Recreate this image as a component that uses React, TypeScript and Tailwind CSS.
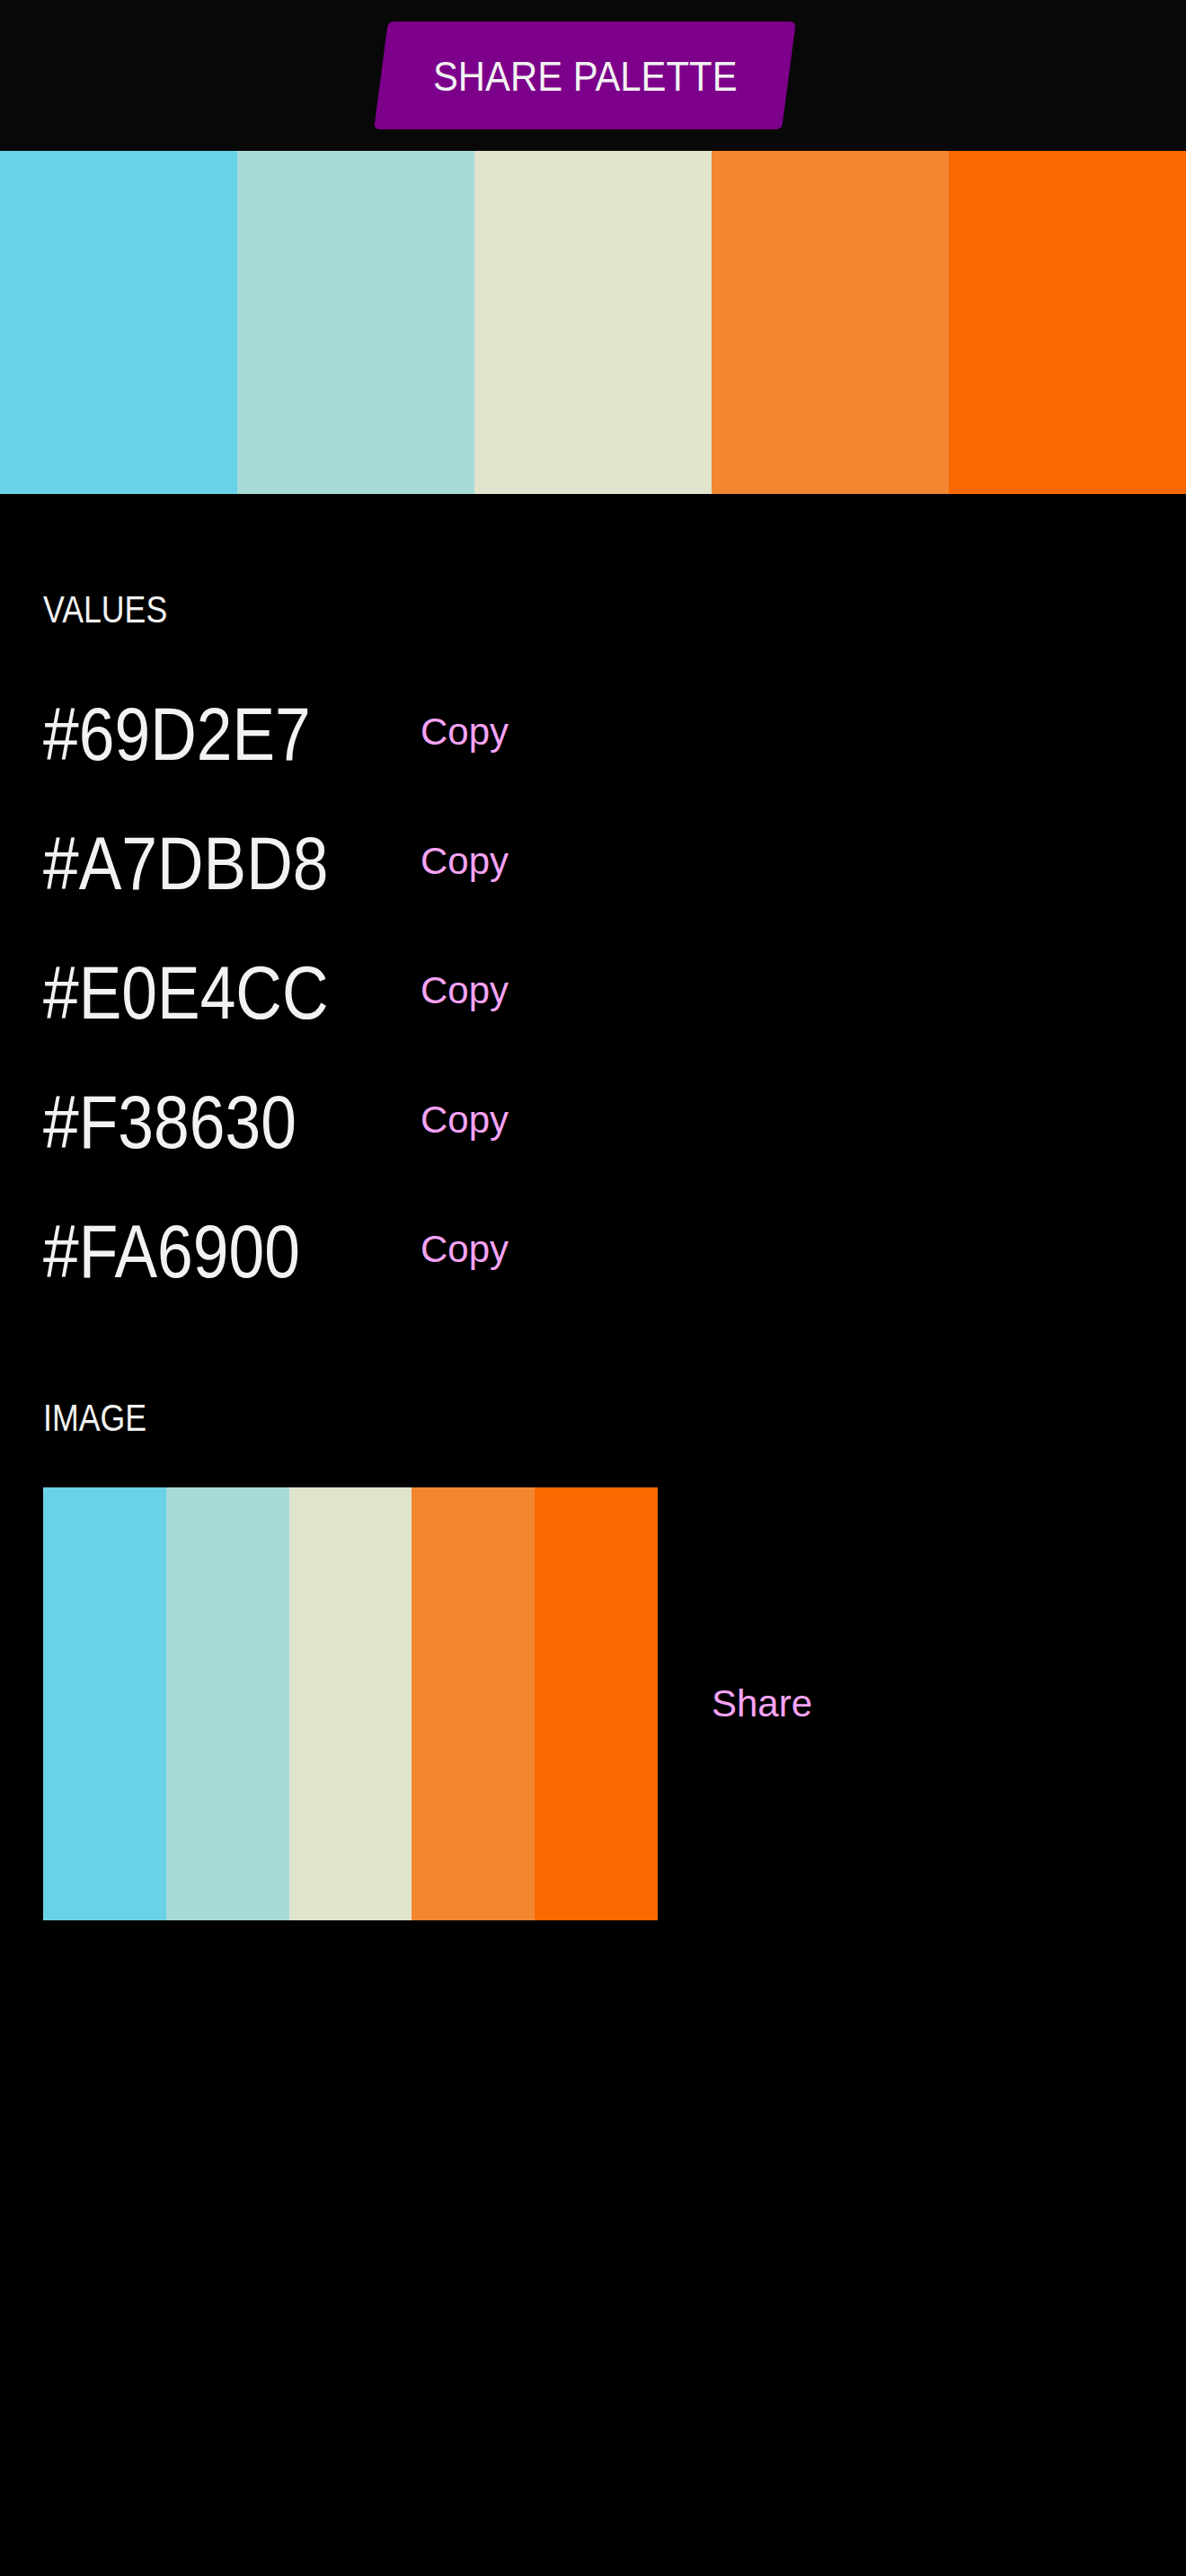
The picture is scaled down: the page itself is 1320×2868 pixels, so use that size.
import React from 'react';

const colors = ['#69D2E7', '#A7DBD8', '#E0E4CC', '#F38630', '#FA6900'];

const sans = { fontFamily: '"Liberation Sans", Arial, sans-serif' };

// condensed look: Liberation Sans squeezed horizontally
function Narrow({ children, className = '' }: { children: React.ReactNode; className?: string }) {
  return (
    <span className={`inline-block origin-left scale-x-[0.85] whitespace-nowrap ${className}`} style={sans}>
      {children}
    </span>
  );
}

export default function App() {
  return (
    <div className="min-h-screen bg-black text-[#f2f2f2]">
      {/* Header */}
      <header className="h-[168px] bg-[#080808] flex items-center justify-center">
        <button className="relative mr-[18px] w-[454px] h-[120px] flex items-center justify-center">
          <span className="absolute inset-0 bg-[#7c008a] rounded-[6px] -skew-x-[7.5deg]"></span>
          <span
            className="relative inline-block origin-center scale-x-[0.89] text-[47px] leading-none text-[#f2f2f2] whitespace-nowrap"
            style={sans}
          >
            SHARE PALETTE
          </span>
        </button>
      </header>

      {/* Palette bar */}
      <div className="flex h-[382px]">
        {colors.map((c) => (
          <div key={c} className="flex-1" style={{ backgroundColor: c }}></div>
        ))}
      </div>

      <main className="px-[48px] pt-[103px]">
        <h2 className="text-[42px] leading-[48px]">
          <Narrow>VALUES</Narrow>
        </h2>

        <ul className="mt-[40px] flex flex-col">
          {colors.map((c) => (
            <li key={c} className="flex items-center h-[144px]">
              <span className="w-[420px] text-[84px] leading-none">
                <Narrow>{c}</Narrow>
              </span>
              <button className="text-[42px] leading-none text-[#f5a3f5]" style={sans}>Copy</button>
            </li>
          ))}
        </ul>

        <h2 className="mt-[90px] text-[42px] leading-[48px]">
          <Narrow>IMAGE</Narrow>
        </h2>

        <div className="mt-[53px] flex items-center gap-[60px]">
          <div className="flex w-[684px] h-[482px]">
            {colors.map((c) => (
              <div key={c} className="flex-1" style={{ backgroundColor: c }}></div>
            ))}
          </div>
          <button className="text-[42px] leading-none text-[#f5a3f5]" style={sans}>Share</button>
        </div>
      </main>
    </div>
  );
}
